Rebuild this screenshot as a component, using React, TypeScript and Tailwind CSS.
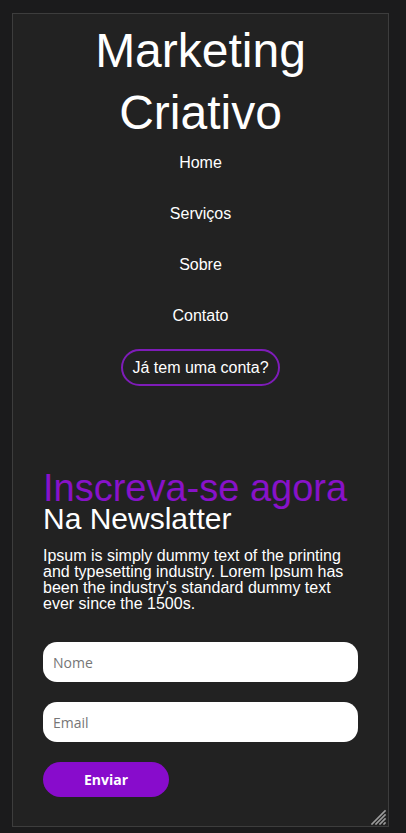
import React from 'react';

const navLinks = ['Home', 'Serviços', 'Sobre', 'Contato'];

const ResizeGrip: React.FC = () => (
  <svg
    className="absolute right-[2px] bottom-[1px] pointer-events-none"
    width="16"
    height="16"
    viewBox="0 0 16 16"
  >
    <g stroke="#9c9c9c" strokeWidth="1.6" strokeLinecap="square">
      <line x1="15" y1="2" x2="2" y2="15" />
      <line x1="15" y1="6" x2="6" y2="15" />
      <line x1="15" y1="10" x2="10" y2="15" />
      <line x1="15" y1="14" x2="14" y2="15" />
    </g>
  </svg>
);

const App: React.FC = () => {
  return (
    <div className="min-h-[833px] bg-[#1b1b1c] pl-[12px] pt-[13px] font-['Liberation_Sans',Arial,sans-serif]">
      <div className="relative w-[377px] h-[814px] bg-[#222222] border border-[#3d3d3d] px-[30px] pt-[6px]">
        <header className="flex flex-col items-center">
          <h1 className="text-white text-[48px] leading-[62px] text-center font-normal">
            Marketing
            <br />
            Criativo
          </h1>
          <nav className="mt-[10px] flex flex-col items-center gap-[33px]">
            {navLinks.map((link) => (
              <a key={link} href="#" className="text-white text-[16px] leading-[18px]">
                {link}
              </a>
            ))}
          </nav>
          <button className="mt-[24px] h-[37px] px-[9px] flex items-center rounded-full border-2 border-[#7e1cb8] text-white text-[16px] leading-[18px]">
            Já tem uma conta?
          </button>
        </header>

        <section className="mt-[83px]">
          <h2 className="text-[#8812c9] text-[38px] leading-[38px] font-normal whitespace-nowrap">
            Inscreva-se agora
          </h2>
          <h3 className="mt-[1px] text-white text-[30px] leading-[22px] font-normal">Na Newslatter</h3>
          <p className="mt-[18px] text-white text-[16px] leading-[16px]">
            Ipsum is simply dummy text of the printing and typesetting industry. Lorem Ipsum has
            been the industry's standard dummy text ever since the 1500s.
          </p>

          <form className="mt-[30px] flex flex-col gap-[20px] font-['Open_Sans',sans-serif]">
            <input
              type="text"
              placeholder="Nome"
              className="h-[40px] w-full rounded-[14px] bg-white pl-[10px] text-[14px] text-black placeholder:text-[#767676] outline-none"
            />
            <input
              type="email"
              placeholder="Email"
              className="h-[40px] w-full rounded-[14px] bg-white pl-[10px] text-[14px] text-black placeholder:text-[#767676] outline-none"
            />
            <button
              type="button"
              className="h-[35px] w-[126px] rounded-full bg-[#880ccc] text-white text-[14px] font-bold"
            >
              Enviar
            </button>
          </form>
        </section>

        <ResizeGrip />
      </div>
    </div>
  );
};

export default App;
